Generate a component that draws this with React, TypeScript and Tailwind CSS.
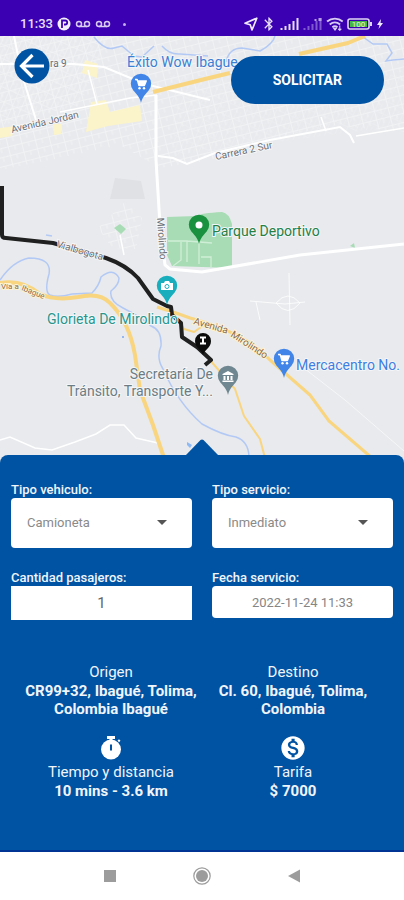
import React, { useState } from "react";
import { MdArrowDropDown, MdBluetooth, MdMonetizationOn } from "react-icons/md";

const VEHICLES = ["Camioneta", "Automóvil", "Van"];
const SERVICES = ["Inmediato", "Programado"];

const Voicemail = () => (
  <svg viewBox="0 0 15 8" className="h-2 w-4" fill="none" stroke="#d9ccf2" strokeWidth="1.5">
    <circle cx="3.5" cy="4" r="2.5" />
    <circle cx="11.5" cy="4" r="2.5" />
    <path d="M3.5 6.5h8" />
  </svg>
);

const Signal = ({ weak = false }: { weak?: boolean }) => (
  <svg viewBox="0 0 19 12" className="h-3 w-5" fill={weak ? "#8059cf" : "#e6ddf7"}>
    <path d="M0 10h2v2H0zM4 8h2v4H4zM8 6h2v6H8zM12 3h2v9h-2zM16 0h2v12h-2z" />
    {weak && <path d="M11 1h2v2h-2zM15 0h3v3h-3z" fill="#b79de6" />}
  </svg>
);

const StatusBar = () => (
  <header className="flex h-9 shrink-0 items-end justify-between bg-[#3a00b1] px-5 pb-1 text-[#e9e0fa]">
    <div className="flex items-center gap-1">
      <span className="text-[13px] leading-4 font-medium">11:33</span>
      <svg viewBox="0 0 14 14" className="h-3.5 w-3.5">
        <circle cx="7" cy="7" r="6.5" fill="#f3eefc" />
        <path d="M5 11V3.5h3.2a2 2 0 0 1 0 4H7" fill="none" stroke="#3a00b1" strokeWidth="1.8" />
      </svg>
      <Voicemail />
      <Voicemail />
      <span className="ml-2 h-[3px] w-[3px] rounded-full bg-[#c3aeea]" />
    </div>
    <div className="flex items-center gap-[3px]">
      <svg viewBox="0 0 14 14" className="h-3.5 w-3.5" fill="none" stroke="#f0eafc" strokeWidth="1.7" strokeLinejoin="round">
        <path d="M12.8 1.2L1 6.2l5.2 1.6L8 13z" />
      </svg>
      <MdBluetooth className="h-4 w-4" stroke="currentColor" />
      <Signal />
      <Signal weak />
      <svg viewBox="0 0 17 13" className="h-3.5 w-[18px]" fill="none" stroke="#d9ccf2" strokeWidth="1.8">
        <path d="M1 4.2c4.3-3.7 10.5-3.7 14.8 0M3.5 7c3-2.5 6.8-2.5 9.8 0M6 9.500c1.5-1.2 3.3-1.2 4.8 0" />
        <path d="M7.2 10.6h2.6L8.5 12.3zM13 8v4.5M11.5 11l1.5 1.5 1.5-1.5" fill="#d9ccf2" strokeWidth="1" />
      </svg>
      <svg viewBox="0 0 26 12" className="h-3 w-[26px]">
        <rect x="1" y="1" width="21" height="10" rx="2" fill="#3a00b1" stroke="#e0d6f3" strokeWidth="1.6" />
        <rect x="3" y="3" width="17" height="6" fill="#43b649" />
        <path d="M23 4h2v4h-2z" fill="#e0d6f3" />
        <text x="11.5" y="9" textAnchor="middle" fontSize="8" fill="#e6f6df">100</text>
      </svg>
      <svg viewBox="0 0 8 12" className="h-3 w-2" fill="#f0eafc">
        <path d="M5 1L1 7h2.500L2.500 11 7 5H4.500z" />
      </svg>
    </div>
  </header>
);

interface PinProps {
  x: number;
  y: number;
  color: string;
  children?: React.ReactNode;
}

// x, y is the centre of the pin's head
const Pin = ({ x, y, color, children }: PinProps) => (
  <g transform={`translate(${x} ${y})`}>
    <path d="M0 19C-1.5 13-4 10.500-7.5 6.800A10.2 10.2 0 1 1 7.5 6.800C4 10.500 1.5 13 0 19z" fill={color} />
    {children}
  </g>
);

const Cart = () => (
  <g transform="translate(-6 -6)">
    <path d="M0 1.5h2.2l1.7 6h5.6l1.8-4.6H3" fill="#fff" stroke="#fff" strokeWidth="1.3" strokeLinejoin="round" />
    <circle cx="4.5" cy="10.3" r="1.2" fill="#fff" />
    <circle cx="9" cy="10.3" r="1.2" fill="#fff" />
  </g>
);

interface StreetNameProps {
  x: number;
  y: number;
  angle?: number;
  children: React.ReactNode;
}

const StreetName = ({ x, y, angle = 0, children }: StreetNameProps) => (
  <text transform={`translate(${x} ${y}) rotate(${angle})`}>{children}</text>
);

const RideMap = () => (
  <svg
    viewBox="0 36 404 427"
    preserveAspectRatio="xMidYMin slice"
    className="absolute inset-0 h-full w-full"
    role="img"
    aria-label="Mapa del recorrido"
  >
    <defs>
      <pattern id="blocks" width="14" height="9" patternUnits="userSpaceOnUse" patternTransform="rotate(-14)">
        <path d="M0 .5h14M.5 0v9M7 0v5" stroke="#f1f2f4" strokeWidth="1" fill="none" />
      </pattern>
      <pattern id="blocksSteep" width="9" height="13" patternUnits="userSpaceOnUse" patternTransform="rotate(24)">
        <path d="M0 .5h9M.5 0v13M5 4v9" stroke="#f3f4f6" strokeWidth="1" fill="none" />
      </pattern>
    </defs>

    <rect y="36" width="404" height="427" fill="#e8eaed" />
    <path d="M0 36H404V132L330 125L270 140L210 160L160 168L120 145L60 158L0 170z" fill="url(#blocks)" />
    <path d="M0 36H110L80 105L0 125z" fill="url(#blocksSteep)" opacity=".6" />
    <path d="M170 75H404V125L270 143L175 155z" fill="url(#blocksSteep)" opacity=".3" />
    <path d="M98 228L125 202L142 218L136 249L112 248z" fill="url(#blocks)" />

    {/* commercial areas */}
    <g fill="#fbf3c9">
      <path d="M85 60L98 64L97 78L82 73z" />
      <path d="M91 102L106 100L110 112L140 105L142 121L108 126L86 132z" />
      <path d="M0 128L16 126L12 136L0 138z" />
      <path d="M53 124L62 124L61 134L54 135z" />
    </g>
    <path d="M115 178L141 181L145 199L110 199z" fill="#dfe1e5" />

    {/* parks */}
    <path d="M167 217L196 216Q201 213 222 212Q229 213 232 224V268L172 266L167 255z" fill="#a8dcb5" />
    <path d="M168 241H187V262M187 241L212 243M199 243V264M181 242L181 260L173 266M201 257H211V268" fill="none" stroke="#cfeed6" strokeWidth="1.3" />
    <path d="M114 228L120 224L126 229L121 234z" fill="#a8dcb5" />
    <path d="M350 246L354 243L355 248z" fill="#a8dcb5" />

    {/* white streets */}
    <g fill="none" stroke="#fff">
      <path d="M14 36L22 75L36 120" strokeWidth="2" />
      <path d="M0 64H74L104 67L145 84L210 100" strokeWidth="2" />
      <path d="M88 70L97 104M60 112L130 98L157 95" strokeWidth="1.5" />
      <path d="M156 95V160L160 225L165 265L170 269L202 272L300 255L404 244" strokeWidth="3" />
      <path d="M158 156L173 158L187 164L215 153L270 140L340 127L350 135L354 143" strokeWidth="2" />
      <path d="M321 117L326 131M356 136L404 128M120 235L124 255" strokeWidth="1.5" />
      <path d="M250 301L285 304L305 302M289 273L290 325M256 302L260 320M276 303Q288 289 300 303Q288 318 276 303" strokeWidth="1" opacity=".8" />
      <path d="M300 365L345 400L404 451" strokeWidth="1" opacity=".6" />
      <path d="M0 440L10 437L35 448L52 450L75 442L96 434L110 425L124 425L136 438L158 443" strokeWidth="1.5" />
    </g>

    {/* rivers */}
    <g fill="none" stroke="#b3c9f5" strokeWidth="1.5">
      <path d="M94 37Q105 51 114 48L122 46L134 56L142 57L154 46M162 46Q170 55 180 54L208 56M226 62Q229 48 242 48L260 51Q273 44 275 36" />
      <path d="M363 37L373 44L387 44L392 53L386 61L393 60L404 59" />
      <path d="M0 280Q13 261 29 258Q52 258 49 274Q44 292 50 295Q58 298 72 294L92 293Q99 286 101 277Q113 267 119 278Q119 285 111 291Q109 301 123 308Q143 318 151 326Q162 330 161 346Q156 358 163 369Q178 403 202 424Q222 435 236 437Q248 441 249 456" />
      <path d="M46 235L52 236" />
    </g>
    <path d="M187 442L192 445L190 448L187 445z" fill="#8dbaf4" />
    <circle cx="123" cy="337" r="1" fill="#7aa4ee" />

    {/* main roads */}
    <g fill="none" stroke="#f9d57f" strokeLinejoin="round">
      <path d="M153 92L205 79L230 73M299 54L348 43L365 36" strokeWidth="4" />
      <path d="M0 283Q22 279 40 294Q55 301 78 297Q100 292 110 303Q129 321 135 355L140 390L153 425L164 458" strokeWidth="4" />
      <path d="M157 307L176 313L190 318Q246 333 270 360L310 395L329 421L372 458" strokeWidth="3" />
      <path d="M170 308L184 329L194 332L204 325M209 359L216 367L235 389L244 416L260 439L265 458" strokeWidth="2" />
    </g>

    {/* requested route */}
    <path d="M2 186V235Q2 238 6 238L53 243L106 258Q126 265 138 278L153 299L167 306L171 307L172 315L181 323L182 337L197 347L211 360L205 365" fill="none" stroke="#202020" strokeWidth="4" strokeLinejoin="round" />

    {/* street names */}
    <g fontSize="10" fill="#6b6f75" stroke="#f6f7f8" strokeWidth="2" paintOrder="stroke">
      <StreetName x={50} y={67}>ra 9</StreetName>
      <StreetName x={12} y={133} angle={-13}>Avenida Jordan</StreetName>
      <StreetName x={216} y={160} angle={-12}>Carrera 2 Sur</StreetName>
      <StreetName x={157} y={218} angle={86}>Mirolindo</StreetName>
      <StreetName x={56} y={247} angle={16}>Vialbogota</StreetName>
      <g fill="#8a6c4c" stroke="#fff3d3">
        <g fontSize="8">
          <StreetName x={1} y={289}>Vía a</StreetName>
          <StreetName x={21} y={290} angle={22}>Ibague</StreetName>
        </g>
        <StreetName x={193} y={324} angle={16}>Avenida</StreetName>
        <StreetName x={230} y={336} angle={33}>Mirolindo</StreetName>
      </g>
    </g>

    {/* places */}
    <g fontSize="14" stroke="#f3f5f7" strokeWidth="2" paintOrder="stroke">
      <text x="127" y="67" fill="#3b7fd4">Éxito Wow Ibague</text>
      <text x="212" y="236" fill="#258046">Parque Deportivo</text>
      <text x="47" y="324" fill="#29958d">Glorieta De Mirolindo</text>
      <text x="296" y="370" fill="#3f7ee2">Mercacentro No.</text>
      <g textAnchor="end" fill="#6c7c84">
        <text x="213" y="379">Secretaría De</text>
        <text x="213" y="396">Tránsito, Transporte Y...</text>
      </g>
    </g>

    <Pin x={141} y={84} color="#4285e8"><Cart /></Pin>
    <Pin x={284} y={359} color="#4285e8"><Cart /></Pin>
    <Pin x={199} y={225} color="#19913f">
      <circle r="3.5" fill="#fff" />
    </Pin>
    <Pin x={167} y={286} color="#18aebd">
      <path d="M-6-3h3l1-2h4l1 2h3v7H-6z" fill="#fff" />
      <circle cy=".5" r="2" fill="#fff" stroke="#18aebd" />
    </Pin>
    <Pin x={228} y={376} color="#6f8790">
      <path d="M-5.5-2L0-5l5.5 3v1h-11zM-4.5 0h2v4h-2zM-1 0h2v4h-2zM2.5 0h2v4h-2zM-5.5 4.500h11V6h-11z" fill="#fff" />
    </Pin>
    <g transform="translate(203 341)">
      <path d="M0 14C-1 9-8 7-8 0a8 8 0 1 1 16 0C8 7 1 9 0 14z" fill="#0b0b0b" />
      <path d="M-3-4.500h6v2h-2v4h2v2h-6v-2h2v-4h-2z" fill="#fff" />
    </g>
  </svg>
);

interface SelectFieldProps {
  id: string;
  label: string;
  options: string[];
}

const SelectField = ({ id, label, options }: SelectFieldProps) => {
  const [value, setValue] = useState(options[0]);

  return (
    <div className="flex flex-col">
      <label htmlFor={id} className="text-[13px] leading-4 font-medium">
        {label}
      </label>
      <div className="relative">
        <select
          id={id}
          value={value}
          onChange={(e) => setValue(e.target.value)}
          className="h-[50px] w-full appearance-none rounded-sm bg-white pr-12 pl-4 text-[13px] text-[#8a8a8a]"
        >
          {options.map((option) => (
            <option key={option}>{option}</option>
          ))}
        </select>
        <MdArrowDropDown className="pointer-events-none absolute top-3 right-4.5 h-6 w-6 text-[#555]" />
      </div>
    </div>
  );
};

const BookingPanel = () => {
  const [passengers, setPassengers] = useState("1");
  const [date, setDate] = useState("2022-11-24 11:33");

  return (
    <section className="relative -mt-2 shrink-0 rounded-t-lg border-b-2 border-[#003494] bg-[#0052a2] pt-[27px] pb-[50px] text-[#f0f5fb]">
      <svg viewBox="0 0 32 16" className="absolute -top-4 left-1/2 h-4 w-8 -translate-x-1/2" fill="#0052a2">
        <path d="M0 16L14.500 1Q16 0 17.500 1L32 16z" />
      </svg>

      <form className="grid grid-cols-2 items-start gap-x-5 gap-y-[22px] px-[11px]">
        <SelectField id="vehicle" label="Tipo vehiculo:" options={VEHICLES} />
        <SelectField id="service" label="Tipo servicio:" options={SERVICES} />
        <div className="flex flex-col">
          <label htmlFor="passengers" className="text-[13px] leading-4 font-medium">
            Cantidad pasajeros:
          </label>
          <input
            id="passengers"
            inputMode="numeric"
            value={passengers}
            onChange={(e) => setPassengers(e.target.value)}
            className="h-[34px] w-full bg-white text-center text-[15px] text-[#666]"
          />
        </div>
        <div className="flex flex-col">
          <label htmlFor="date" className="text-[13px] leading-4 font-medium">
            Fecha servicio:
          </label>
          <input
            id="date"
            value={date}
            onChange={(e) => setDate(e.target.value)}
            className="h-8 w-full rounded-sm bg-white text-center text-[13px] text-[#858585]"
          />
        </div>
      </form>

      <div className="mt-[42px] grid grid-cols-2 gap-y-4 px-5 text-center text-[15px] leading-[18px]">
        <div>
          <p className="leading-5">Origen</p>
          <p className="font-bold">
            CR99+32, Ibagué, Tolima,
            <br />
            Colombia Ibagué
          </p>
        </div>
        <div>
          <p className="leading-5">Destino</p>
          <p className="font-bold">
            Cl. 60, Ibagué, Tolima,
            <br />
            Colombia
          </p>
        </div>
        <div className="flex flex-col items-center">
          <svg viewBox="0 0 24 28" className="h-7 w-6" fill="#fff">
            <path d="M8 2h8v3h-2.500v1.500h-3V5H8zM18.500 6.500l1.500-1.300 1.500 1.500-1.500 1.500z" />
            <circle cx="12" cy="15.5" r="10" />
            <path d="M11 10.500h2v6h-2z" fill="#0052a2" />
          </svg>
          <p className="leading-5">Tiempo y distancia</p>
          <p className="font-bold">10 mins - 3.6 km</p>
        </div>
        <div className="flex flex-col items-center">
          <MdMonetizationOn className="h-7 w-7 text-white" />
          <p className="leading-5">Tarifa</p>
          <p className="font-bold">$ 7000</p>
        </div>
      </div>
    </section>
  );
};

const NavigationBar = () => (
  <nav className="flex h-12 shrink-0 items-center justify-center gap-16 bg-white">
    <button aria-label="Recientes" className="flex h-7 w-7 items-center justify-center">
      <span className="h-3 w-3 bg-[#9c9c9c]" />
    </button>
    <button aria-label="Inicio" className="flex h-7 w-7 items-center justify-center">
      <svg viewBox="0 0 18 18" className="h-[18px] w-[18px]">
        <circle cx="9" cy="9" r="8.2" fill="none" stroke="#9c9c9c" strokeWidth="1.2" />
        <circle cx="9" cy="9" r="6" fill="#9c9c9c" />
      </svg>
    </button>
    <button aria-label="Atrás" className="flex h-7 w-7 items-center justify-center">
      <svg viewBox="0 0 12 14" className="h-3.5 w-3" fill="#9c9c9c">
        <path d="M0 7L12 .5v13z" />
      </svg>
    </button>
  </nav>
);

const App = () => (
  <div className="flex min-h-screen flex-col bg-white font-['Roboto',sans-serif]">
    <StatusBar />
    <main className="flex grow flex-col">
      <div className="relative min-h-96 grow overflow-hidden bg-[#e8eaed]">
        <RideMap />
        <div className="relative flex items-start justify-between pt-3 pr-5 pl-3.5">
          <button aria-label="Volver" className="rounded-full">
            <svg viewBox="0 0 36 36" className="h-9 w-9" fill="none" stroke="#fff" strokeWidth="3.2">
              <circle cx="18" cy="18" r="17.5" fill="#0052a2" stroke="none" />
              <path d="M30 18H8M18.5 7L7.5 18l11 11" />
            </svg>
          </button>
          <button className="mt-2 h-12 rounded-full bg-[#0052a2] px-[42px] text-sm font-bold text-white">
            SOLICITAR
          </button>
        </div>
      </div>
      <BookingPanel />
    </main>
    <NavigationBar />
  </div>
);

export default App;
